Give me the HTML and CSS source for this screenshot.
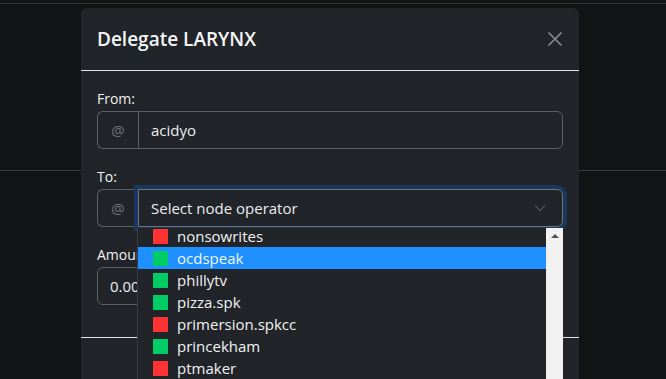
FILE: index.html
```html
<!DOCTYPE html>
<html lang="en">
<head>
    <meta charset="UTF-8">
    <meta name="viewport" content="width=device-width, initial-scale=1.0">
    <title>Delegate LARYNX</title>
    <link rel="stylesheet" href="styles.css">
</head>
<body>
    <div class="page">
        <div class="topbar"></div>
        <div class="page-section"></div>
    </div>

    <div class="modal">
        <div class="modal-header">
            <h5 class="modal-title">Delegate LARYNX</h5>
            <button class="btn-close" aria-label="Close">
                <svg width="16" height="16" viewBox="0 0 16 16"><path d="M1.5 1.5 L14.5 14.5 M14.5 1.5 L1.5 14.5" stroke="#8c8e91" stroke-width="1.6" fill="none"/></svg>
            </button>
        </div>
        <div class="modal-body">
            <div class="field">
                <label>From:</label>
                <div class="input-group">
                    <span class="input-group-text">@</span>
                    <div class="form-control">acidyo</div>
                </div>
            </div>
            <div class="field">
                <label>To:</label>
                <div class="input-group">
                    <span class="input-group-text">@</span>
                    <div class="form-control form-select focus">
                        Select node operator
                        <svg class="chevron" width="12" height="8" viewBox="0 0 12 8"><path d="M1 1.5 L6 6.5 L11 1.5" stroke="#4b5057" stroke-width="1.5" fill="none"/></svg>
                    </div>
                </div>
            </div>
            <div class="field">
                <label>Amount</label>
                <div class="input-group">
                    <div class="form-control amount">0.00</div>
                </div>
            </div>
        </div>
        <div class="modal-footer">
            <button class="btn btn-secondary">Close</button>
            <button class="btn btn-primary">Delegate</button>
        </div>
    </div>

    <!-- native select popup, open -->
    <div class="select-popup">
        <ul class="options">
            <li><span class="dot off"></span>nonsowrites</li>
            <li class="active"><span class="dot on"></span>ocdspeak</li>
            <li><span class="dot on"></span>phillytv</li>
            <li><span class="dot on"></span>pizza.spk</li>
            <li><span class="dot off"></span>primersion.spkcc</li>
            <li><span class="dot on"></span>princekham</li>
            <li><span class="dot off"></span>ptmaker</li>
            <li><span class="dot on"></span>pyrolive</li>
        </ul>
        <div class="scrollbar"><span class="arrow-up"></span></div>
    </div>
</body>
</html>
```

FILE: styles.css
```css
body {
    margin: 0;
    background-color: #121315;
    font-family: "Open Sans", sans-serif;
    color: #e4e6e8;
    height: 379px;
    overflow: hidden;
}
.page {
    width: 100%;
}
.topbar {
    height: 3px;
    border-bottom: 1px solid #333538;
}
.page-section {
    height: 166px;
    border-bottom: 1px solid #393b3e;
}

/* modal */
.modal {
    position: absolute;
    top: 8px;
    left: 81px;
    width: 498px;
    background-color: #212429;
    border-radius: 6px;
}
.modal-header {
    display: flex;
    align-items: center;
    justify-content: space-between;
    padding: 16px;
    border-bottom: 1px solid #dee2e6;
}
.modal-title {
    margin: 0;
    font-size: 19px;
    font-weight: 600;
    line-height: 30px;
    color: #f4f5f6;
}
.btn-close {
    background: none;
    border: none;
    padding: 0;
    width: 16px;
    height: 16px;
    display: flex;
}
.modal-body {
    padding: 16px;
}
.field {
    margin-bottom: 16px;
}
.field label {
    display: block;
    font-size: 14px;
    line-height: 24px;
    color: #f0f1f2;
}
.input-group {
    display: flex;
    height: 38px;
}
.input-group-text {
    display: flex;
    align-items: center;
    justify-content: center;
    padding: 0 12px;
    width: 16px;
    border: 1px solid #5b6067;
    border-right: none;
    border-radius: 6px 0 0 6px;
    color: #6f747a;
    font-size: 15px;
}
.form-control {
    flex: 1;
    display: flex;
    align-items: center;
    padding: 0 12px;
    border: 1px solid #5b6067;
    border-radius: 0 6px 6px 0;
    font-size: 15px;
    color: #eceef0;
}
.form-control.amount {
    border-radius: 6px;
}
.form-select {
    justify-content: space-between;
}
.form-select.focus {
    border-color: #6d737a;
    box-shadow: 0 0 0 4px #1c375e;
}
.chevron {
    margin-right: 4px;
}
.modal-footer {
    display: flex;
    justify-content: flex-end;
    gap: 8px;
    padding: 12px;
    border-top: 1px solid #dee2e6;
}
.btn {
    border: 1px solid transparent;
    border-radius: 6px;
    padding: 6px 12px;
    font-size: 15px;
    line-height: 24px;
    margin: 4px;
    color: #fff;
    font-family: "Open Sans", sans-serif;
}
.btn-secondary {
    background-color: #6c757d;
}
.btn-primary {
    background-color: #0d6efd;
}

/* open dropdown */
.select-popup {
    position: absolute;
    top: 228px;
    left: 137px;
    width: 425px;
    height: 160px;
    display: flex;
    background-color: #212429;
    border-left: 1px solid #3a3e44;
    overflow: hidden;
}
.options {
    list-style: none;
    margin: -3px 0 0 0;
    padding: 0;
    flex: 1;
}
.options li {
    display: flex;
    align-items: center;
    height: 22px;
    padding-left: 15px;
    font-size: 15px;
    color: #f2f3f4;
}
.options li.active {
    background-color: #1e90ff;
}
.dot {
    width: 15px;
    height: 15px;
    margin-right: 9px;
}
.dot.on {
    background-color: #00cc66;
}
.dot.off {
    background-color: #ff3333;
}
.scrollbar {
    width: 17px;
    background-color: #f1f1f1;
    display: flex;
    justify-content: center;
    padding-top: 6px;
    box-sizing: border-box;
}
.arrow-up {
    width: 0;
    height: 0;
    border-left: 4px solid transparent;
    border-right: 4px solid transparent;
    border-bottom: 4px solid #505050;
}
```
